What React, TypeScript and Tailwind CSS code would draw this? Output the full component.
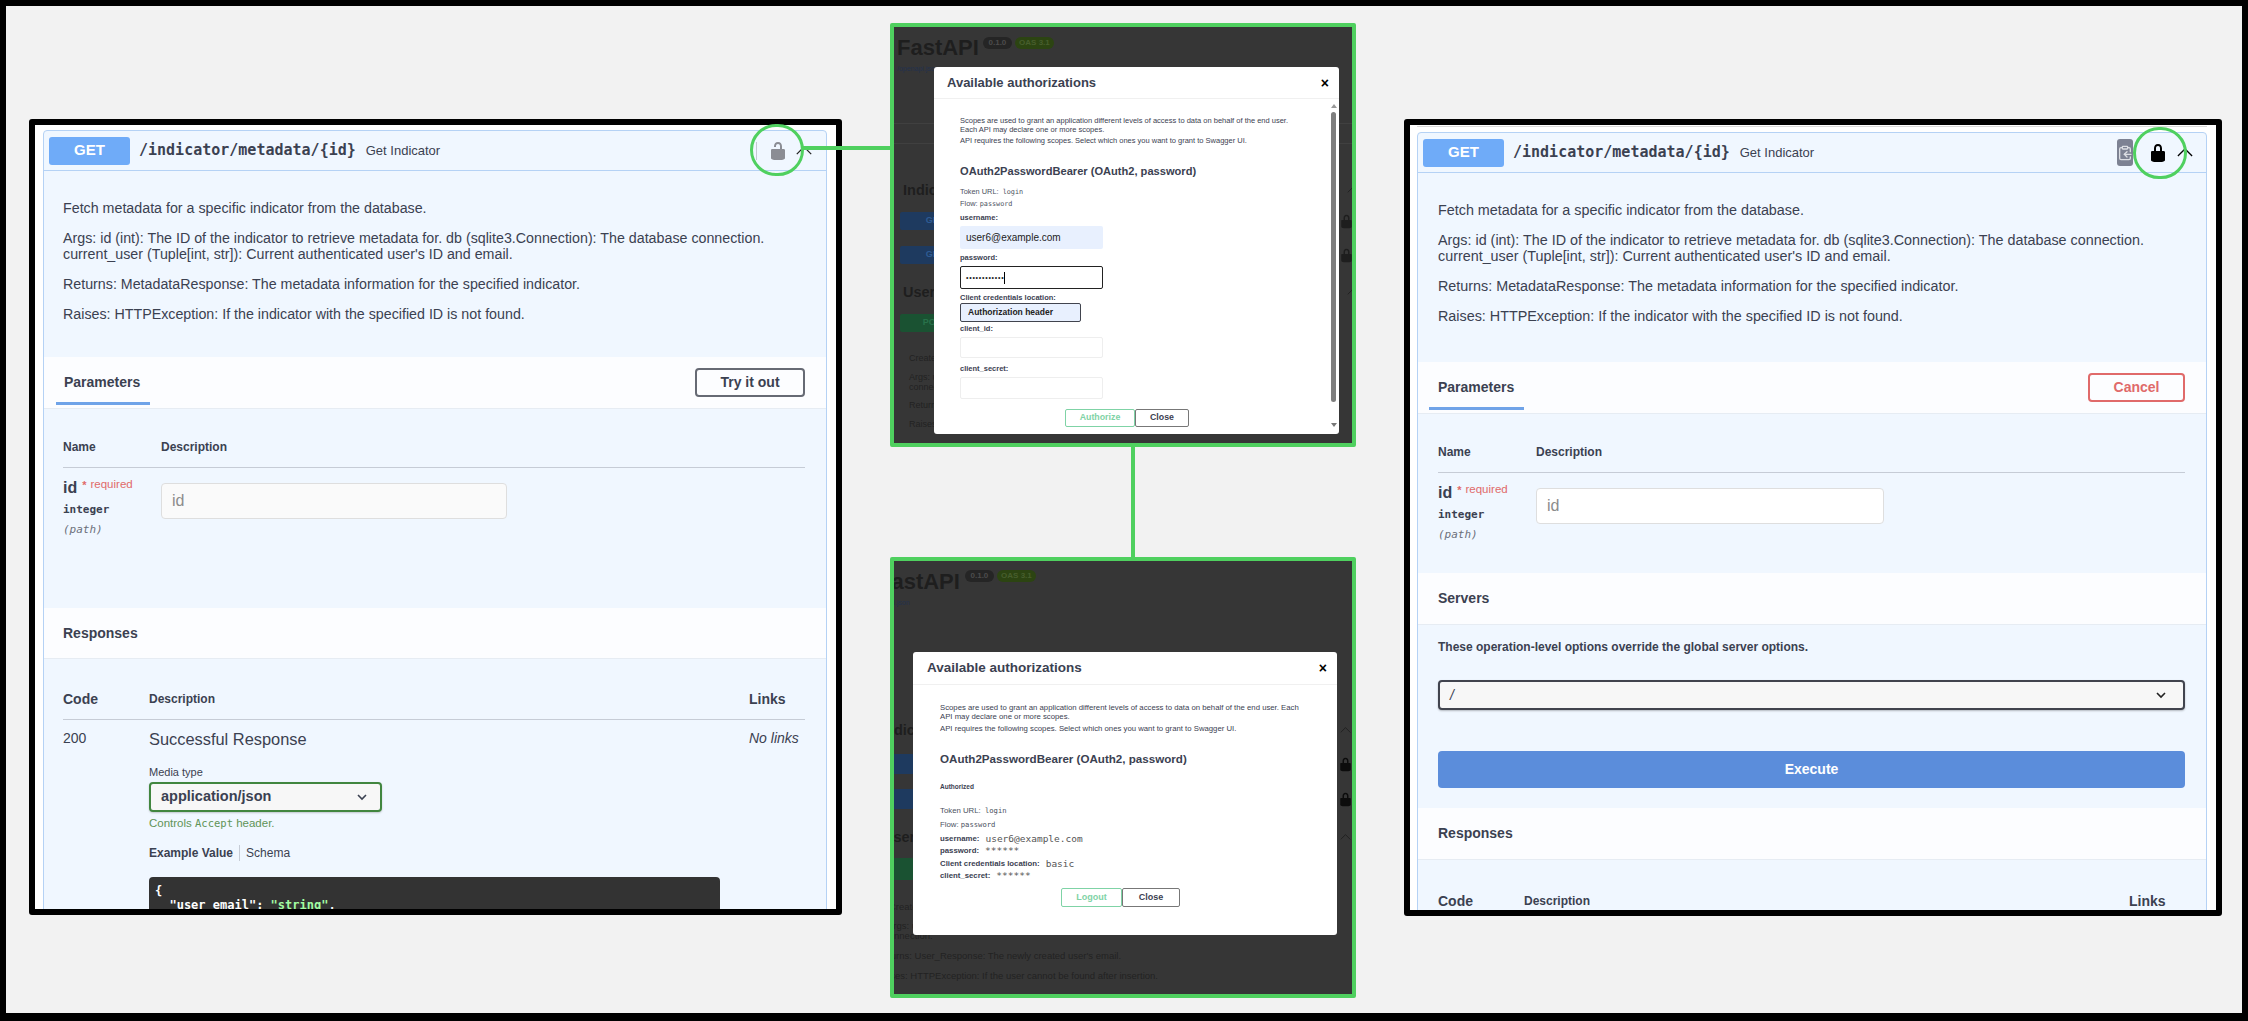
import { ClipboardCopy } from 'lucide-react';

const SANS = 'font-["Liberation_Sans",Arial,sans-serif]';
const MONO = 'font-["DejaVu_Sans_Mono",monospace]';

const LOCKED =
  'M15.8 8H14V5.6C14 2.703 12.665 1 10 1 7.334 1 6 2.703 6 5.6V8H4c-.553 0-1 .646-1 1.199V17c0 .549.428 1.139.951 1.307l1.197.387C5.672 18.861 6.55 19 7.1 19h5.8c.549 0 1.428-.139 1.951-.307l1.196-.387c.524-.167.953-.757.953-1.306V9.199C17 8.646 16.352 8 15.8 8zM12 8H8V5.199C8 3.754 8.797 3 10 3c1.203 0 2 .754 2 2.199V8z';
const UNLOCKED =
  'M15.8 8H14V5.6C14 2.703 12.665 1 10 1 7.334 1 6 2.703 6 5.6V6h2v-.801C8 3.754 8.797 3 10 3c1.203 0 2 .754 2 2.199V8H4c-.553 0-1 .646-1 1.199V17c0 .549.428 1.139.951 1.307l1.197.387C5.672 18.861 6.55 19 7.1 19h5.8c.549 0 1.428-.139 1.951-.307l1.196-.387c.524-.167.953-.757.953-1.306V9.199C17 8.646 16.352 8 15.8 8z';

function Lock({ open, className }: { open?: boolean; className: string }) {
  return (
    <svg viewBox="0 0 20 20" className={className} fill="currentColor">
      <path d={open ? UNLOCKED : LOCKED} />
    </svg>
  );
}

function Chevron({ className }: { className?: string }) {
  return (
    <svg viewBox="0 0 18 10" className={className} fill="none" stroke="currentColor" strokeWidth="1.4">
      <path d="M1 9l8-8 8 8" />
    </svg>
  );
}

function SelectArrow({ className }: { className?: string }) {
  return (
    <svg viewBox="0 0 10 7" className={className} fill="none" stroke="currentColor" strokeWidth="1.6">
      <path d="M1 1l4 4 4-4" />
    </svg>
  );
}

function Summary({ authorized }: { authorized?: boolean }) {
  return (
    <div className="flex h-[40px] items-center border-b border-[#b5d2f5] pl-[5px]">
      <div className="flex h-[28px] w-[81px] items-center justify-center rounded-[3px] bg-[#6fabf8] text-[15px] font-bold text-white">
        GET
      </div>
      <span className={`ml-[9px] text-[15px] font-bold text-[#3b4151] ${MONO}`}>/indicator/metadata/{'{id}'}</span>
      <span className="ml-[10px] text-[13px] text-[#3b4151]">Get Indicator</span>
      {authorized ? (
        <div className="ml-auto flex items-center">
          <div className="flex h-[27px] w-[16px] items-center justify-center rounded-[3px] bg-[#7d8293]">
            <ClipboardCopy className="h-[16px] w-[16px] shrink-0 text-[#dcdee3]" strokeWidth={2} />
          </div>
          <Lock className="ml-[15px] h-[20px] w-[20px] text-black" />
          <Chevron className="mr-[13px] ml-[9px] h-[9px] w-[16px] text-black" />
        </div>
      ) : (
        <div className="ml-auto flex items-center">
          <div className="h-[18px] w-px bg-[#c4c9d2]" />
          <Lock open className="ml-[11px] h-[20px] w-[20px] text-[#8b8d94]" />
          <Chevron className="mr-[13px] ml-[7px] h-[9px] w-[18px] text-[#222]" />
        </div>
      )}
    </div>
  );
}

function Description({ className }: { className: string }) {
  return (
    <div className={`pt-[29px] leading-[16px] text-[#3b4151] ${className}`}>
      <p>Fetch metadata for a specific indicator from the database.</p>
      <p className="mt-[14px]">
        Args: id (int): The ID of the indicator to retrieve metadata for. db (sqlite3.Connection): The database
        connection.
        <br />
        current_user (Tuple[int, str]): Current authenticated user's ID and email.
      </p>
      <p className="mt-[14px]">Returns: MetadataResponse: The metadata information for the specified indicator.</p>
      <p className="mt-[14px]">Raises: HTTPException: If the indicator with the specified ID is not found.</p>
    </div>
  );
}

function ParametersBand({ cancel }: { cancel?: boolean }) {
  return (
    <div
      className={`flex h-[52px] items-start justify-between border-b border-[#e6ecf3] bg-[#fcfdff] pr-[21px] ${cancel ? 'pl-[11px]' : 'pl-[12px]'}`}
    >
      <div
        className={`mt-[5px] flex h-[43px] items-center border-b-[3px] border-[#6fa3e8] text-[14px] font-bold text-[#3b4151] ${cancel ? 'w-[95px] pl-[9px]' : 'w-[94px] pl-[8px]'}`}
      >
        Parameters
      </div>
      {cancel ? (
        <button className="mt-[11px] h-[29px] w-[97px] rounded-[4px] border-2 border-[#e06a6a] text-[14px] font-bold text-[#e06a6a]">
          Cancel
        </button>
      ) : (
        <button className="mt-[11px] h-[29px] w-[110px] rounded-[4px] border-2 border-[#666a74] text-[14px] font-bold text-[#3b4151]">
          Try it out
        </button>
      )}
    </div>
  );
}

function ParametersTable({ inputClass, inset }: { inputClass: string; inset: string }) {
  return (
    <div className={`mr-[21px] pt-[30px] ${inset}`}>
      <div className="flex h-[29px] border-b border-[#c6ccd6] text-[12px] leading-[16px] font-bold text-[#3b4151]">
        <div className="w-[98px]">Name</div>
        <div>Description</div>
      </div>
      <div className="flex pt-[15px]">
        <div className="-mt-[5px] w-[98px]">
          <div className="flex h-[20px] items-start text-[16px] leading-[20px] font-bold text-[#3b4151]">
            id
            <span className="ml-[5px] text-[11px] leading-[14px] font-bold text-[#e06a6a]">*</span>
            <span className="ml-[4px] text-[11.5px] leading-[13px] font-normal whitespace-nowrap text-[#e06a6a]">
              required
            </span>
          </div>
          <div className={`mt-[4px] text-[11px] leading-[16px] font-bold text-[#3b4151] ${MONO}`}>integer</div>
          <div className={`mt-[4px] text-[11px] leading-[16px] text-[#6b6f7a] italic ${MONO}`}>(path)</div>
        </div>
        <div
          className={`flex h-[36px] items-center rounded-[4px] border border-[#dedede] pl-[10px] text-[16px] text-[#8c8c8c] ${inputClass}`}
        >
          id
        </div>
      </div>
    </div>
  );
}

function Band({ title, className }: { title: string; className: string }) {
  return (
    <div className={`flex items-center border-b border-[#e6ecf3] bg-[#fcfdff] text-[14px] font-bold text-[#3b4151] ${className}`}>
      {title}
    </div>
  );
}

function ResponsesHead({ descWidth, inset }: { descWidth: string; inset: string }) {
  return (
    <div className={`mr-[21px] flex h-[29px] border-b border-[#c6ccd6] text-[#3b4151] ${inset}`}>
      <div className="w-[86px] text-[14px] leading-[16px] font-bold">Code</div>
      <div className={`${descWidth} text-[12px] leading-[16px] font-bold`}>Description</div>
      <div className="text-[14px] leading-[16px] font-bold">Links</div>
    </div>
  );
}

function LeftPanel() {
  return (
    <div className={`mt-[113px] ml-[23px] h-[796px] w-[813px] shrink-0 overflow-hidden rounded-[3px] border-[6px] border-black bg-white pt-[5px] pr-[9px] pl-[8px] ${SANS}`}>
      <div className="h-[900px] rounded-t-[4px] border border-[#b5d2f5] bg-[#f0f7ff]">
        <Summary />
        <div className="h-[186px]">
          <Description className="pl-[19px] text-[14.25px]" />
        </div>
        <ParametersBand />
        <div className="h-[199px]">
          <ParametersTable inset="ml-[19px]" inputClass="w-[346px] bg-[#fafafa]" />
        </div>
        <Band title="Responses" className="h-[51px] pl-[19px]" />
        <div className="pt-[32px]">
          <ResponsesHead inset="ml-[19px]" descWidth="w-[600px]" />
          <div className="mr-[21px] ml-[19px] flex pt-[10px] text-[#3b4151]">
            <div className="w-[86px] text-[14px] leading-[16px]">200</div>
            <div className="w-[600px]">
              <div className="-mt-[1px] text-[16.4px] leading-[20px]">Successful Response</div>
              <div className="mt-[15px] text-[11px] leading-[16px]">Media type</div>
              <div className="mt-[2px] flex h-[30px] w-[233px] items-center justify-between rounded-[4px] border-2 border-[#41863f] bg-[#f7f7f7] pr-[13px] pl-[10px] text-[14.5px] font-bold shadow-[0_1px_2px_rgba(0,0,0,0.2)]">
                application/json
                <SelectArrow className="h-[7px] w-[10px]" />
              </div>
              <div className="mt-[3px] text-[11.5px] leading-[16px] text-[#5f9457]">
                Controls <span className={`text-[10.5px] ${MONO}`}>Accept</span> header.
              </div>
              <div className="mt-[14px] flex h-[16px] items-center text-[12px]">
                <span className="font-bold">Example Value</span>
                <span className="mx-[6px] h-[16px] w-px bg-[#c6ccd6]" />
                <span>Schema</span>
              </div>
              <div className={`mt-[16px] h-[120px] w-[571px] rounded-[4px] bg-[#333333] pt-[7px] pl-[6px] text-[12px] leading-[14px] font-bold whitespace-pre text-white ${MONO}`}>
                {'{\n  "user_email": '}
                <span className="text-[#a2fca2]">"string"</span>,
              </div>
            </div>
            <div className="text-[14px] leading-[16px] italic">No links</div>
          </div>
        </div>
      </div>
    </div>
  );
}

function RightPanel() {
  return (
    <div className={`mt-[113px] ml-[48px] h-[797px] w-[818px] shrink-0 overflow-hidden rounded-[3px] border-[6px] border-black bg-white pt-[1px] pr-[9px] pl-[7px] ${SANS}`}>
      <div className="h-px bg-[#d8d8d8]" />
      <div className="mt-[5px] h-[900px] rounded-t-[4px] border border-[#b5d2f5] bg-[#f0f7ff]">
        <Summary authorized />
        <div className="h-[189px]">
          <Description className="pl-[20px] text-[14.35px]" />
        </div>
        <ParametersBand cancel />
        <div className="h-[159px]">
          <ParametersTable inset="ml-[20px]" inputClass="w-[348px] bg-white" />
        </div>
        <Band title="Servers" className="h-[52px] pl-[20px]" />
        <div className="mr-[21px] ml-[20px] h-[183px]">
          <div className="pt-[14px] text-[12px] leading-[16px] font-bold text-[#3b4151]">
            These operation-level options override the global server options.
          </div>
          <div className="mt-[25px] flex h-[30px] items-center justify-between rounded-[4px] border-2 border-[#41444e] bg-[#f7f7f7] pr-[17px] pl-[10px] text-[14px] text-[#3b4151] italic shadow-[0_1px_2px_rgba(0,0,0,0.25)]">
            /
            <SelectArrow className="h-[7px] w-[10px] text-[#222]" />
          </div>
          <div className="mt-[41px] flex h-[37px] items-center justify-center rounded-[4px] bg-[#5b8ddb] text-[14px] font-bold text-white">
            Execute
          </div>
        </div>
        <Band title="Responses" className="h-[52px] pl-[20px]" />
        <div className="pt-[33px]">
          <ResponsesHead inset="ml-[20px]" descWidth="w-[605px]" />
        </div>
      </div>
    </div>
  );
}

function BackdropBar({ color, text, label, lock }: { color: string; text: string; label: string; lock?: string }) {
  return (
    <div className="flex h-full w-full items-center justify-between">
      <div className={`flex h-full w-[70px] items-center justify-center rounded-[2px] text-[9px] font-bold ${color} ${text}`}>
        {label}
      </div>
      {lock && <Lock className={`h-[15px] w-[15px] ${lock}`} />}
    </div>
  );
}

function ModalHeader({ h, pl, titleSize }: { h: string; pl: string; titleSize: string }) {
  return (
    <div className={`flex items-center justify-between border-b border-[#f0f0f0] pr-[10px] ${h} ${pl}`}>
      <span className={`font-bold text-[#3b4151] ${titleSize}`}>Available authorizations</span>
      <span className="text-[14px] leading-none font-bold text-black">×</span>
    </div>
  );
}

function FieldLabel({ children, className }: { children: string; className: string }) {
  return <div className={`h-[10px] text-[7.5px] leading-[10px] font-bold text-[#3b4151] ${className}`}>{children}</div>;
}

function TopModal() {
  return (
    <div className={`absolute top-[40px] left-[40px] h-[367px] w-[405px] rounded-[3px] bg-white ${SANS}`}>
      <ModalHeader h="h-[32px]" pl="pl-[13px]" titleSize="text-[13px]" />
      <div className="flex">
        <div className="flex-1 pt-[17px] pl-[26px] text-[#3b4151]">
          <p className="w-[335px] text-[7.5px] leading-[9px]">
            Scopes are used to grant an application different levels of access to data on behalf of the end user. Each
            API may declare one or more scopes.
          </p>
          <p className="mt-[2px] text-[7.5px] leading-[9px]">
            API requires the following scopes. Select which ones you want to grant to Swagger UI.
          </p>
          <div className="mt-[19px] text-[11.1px] leading-[14px] font-bold">OAuth2PasswordBearer (OAuth2, password)</div>
          <div className="mt-[9px] h-[10px] text-[7.4px] leading-[10px] text-[#4b5160]">
            Token URL: <span className={`ml-[2px] text-[6.8px] ${MONO}`}>login</span>
          </div>
          <div className="mt-[2px] h-[10px] text-[7.4px] leading-[10px] text-[#4b5160]">
            Flow: <span className={`text-[6.8px] ${MONO}`}>password</span>
          </div>
          <FieldLabel className="mt-[4px]">username:</FieldLabel>
          <div className="mt-[3px] flex h-[23px] w-[143px] items-center rounded-[2px] bg-[#e8f0fe] pl-[6px] text-[10px] text-[#222]">
            user6@example.com
          </div>
          <FieldLabel className="mt-[4px]">password:</FieldLabel>
          <div className="mt-[3px] flex h-[23px] w-[143px] items-center rounded-[2px] border-[1.5px] border-[#222] pl-[5px] text-[7px] leading-none tracking-[0.75px] text-[#222]">
            ••••••••••••
            <span className="h-[12px] w-px bg-black" />
          </div>
          <FieldLabel className="mt-[4px]">Client credentials location:</FieldLabel>
          <div className="flex h-[19px] w-[121px] items-center rounded-[2px] border-[1.5px] border-[#41444e] bg-[#e8f0fe] pl-[7px] text-[8.5px] font-bold text-[#222]">
            Authorization header
          </div>
          <FieldLabel className="mt-[2px]">client_id:</FieldLabel>
          <div className="mt-[3px] h-[21px] w-[143px] rounded-[2px] border border-[#eeeeee]" />
          <FieldLabel className="mt-[6px]">client_secret:</FieldLabel>
          <div className="mt-[3px] h-[22px] w-[143px] rounded-[2px] border border-[#eeeeee]" />
          <div className="mt-[10px] ml-[105px] flex">
            <button className="h-[18px] w-[70px] rounded-[2px] border border-[#7fd3a6] text-[8.8px] font-bold text-[#7fd3a6]">
              Authorize
            </button>
            <button className="h-[18px] w-[54px] rounded-[2px] border border-[#777] text-[8.8px] font-bold text-[#3b4151]">
              Close
            </button>
          </div>
        </div>
        <div className="mr-[2px] flex w-[7px] flex-col items-center pt-[5px]">
          <div className="h-0 w-0 border-x-[3px] border-b-[4px] border-x-transparent border-b-[#999]" />
          <div className="mt-[4px] h-[290px] w-[5px] rounded-[3px] bg-[#7e7e7e]" />
          <div className="mt-[21px] h-0 w-0 border-x-[3px] border-t-[4px] border-x-transparent border-t-[#777]" />
        </div>
      </div>
    </div>
  );
}

function AuthRow({ label, value, className }: { label: string; value: string; className: string }) {
  return (
    <div className={`flex h-[10px] items-center ${className}`}>
      <span className="mr-[6px] text-[7.8px] font-bold text-[#3b4151]">{label}</span>
      <span className={`text-[9.5px] text-[#555] ${MONO}`}>{value}</span>
    </div>
  );
}

function BottomModal() {
  return (
    <div className={`absolute top-[91px] left-[19px] h-[283px] w-[424px] rounded-[3px] bg-white ${SANS}`}>
      <ModalHeader h="h-[33px]" pl="pl-[14px]" titleSize="text-[13.5px]" />
      <div className="pt-[18px] pl-[27px] text-[#3b4151]">
        <p className="w-[368px] text-[7.75px] leading-[9px]">
          Scopes are used to grant an application different levels of access to data on behalf of the end user. Each API
          may declare one or more scopes.
        </p>
        <p className="mt-[3px] text-[7.75px] leading-[9px]">
          API requires the following scopes. Select which ones you want to grant to Swagger UI.
        </p>
        <div className="mt-[19px] text-[11.6px] leading-[14px] font-bold">OAuth2PasswordBearer (OAuth2, password)</div>
        <div className="mt-[16px] h-[10px] text-[6.5px] leading-[10px] font-bold">Authorized</div>
        <div className="mt-[14px] h-[10px] text-[7.8px] leading-[10px] text-[#4b5160]">
          Token URL: <span className={`ml-[2px] text-[7.2px] ${MONO}`}>login</span>
        </div>
        <div className="mt-[4px] h-[10px] text-[7.8px] leading-[10px] text-[#4b5160]">
          Flow: <span className={`text-[7.2px] ${MONO}`}>password</span>
        </div>
        <AuthRow className="mt-[4px]" label="username:" value="user6@example.com" />
        <AuthRow className="mt-[2px]" label="password:" value="******" />
        <AuthRow className="mt-[3px]" label="Client credentials location:" value="basic" />
        <AuthRow className="mt-[2px]" label="client_secret:" value="******" />
        <div className="mt-[7px] ml-[121px] flex">
          <button className="h-[19px] w-[61px] rounded-[2px] border border-[#7fd3a6] text-[9px] font-bold text-[#7fd3a6]">
            Logout
          </button>
          <button className="h-[19px] w-[58px] rounded-[2px] border border-[#777] text-[9px] font-bold text-[#3b4151]">
            Close
          </button>
        </div>
      </div>
    </div>
  );
}

function Badges({ className }: { className: string }) {
  return (
    <div className={`flex gap-[3px] ${className}`}>
      <span className="flex h-[12px] w-[29px] items-center justify-center rounded-[6px] bg-[#252525] text-[8px] font-bold text-[#4c4c4c]">
        0.1.0
      </span>
      <span className="flex h-[12px] w-[39px] items-center justify-center rounded-[6px] bg-[#2c4412] text-[8px] font-bold text-[#475e2d]">
        OAS 3.1
      </span>
    </div>
  );
}

function TopScreenshot() {
  return (
    <div className={`relative h-[424px] shrink-0 overflow-hidden rounded-[2px] border-4 border-[#4fd05f] bg-[#363636] text-[#1e1e1e] ${SANS}`}>
      <div className="flex pt-[8px] pl-[3px]">
        <span className="text-[22px] leading-[26px] font-bold">FastAPI</span>
        <Badges className="mt-[2px] ml-[4px]" />
      </div>
      <div className="mt-[3px] pl-[3px] text-[7px] leading-[9px] text-[#23314d]">/openapi.json</div>
      <div className="mt-[50px] h-px bg-[#404040]" />
      <div className="mt-[19px] h-px bg-[#404040]" />
      <div className="mt-[37px] flex items-center justify-between pl-[9px] text-[14.5px] leading-[18px] font-bold">
        Indicators
        <Chevron className="-mr-[6px] h-[6px] w-[11px] text-[#1e1e1e]" />
      </div>
      <div className="mt-[13px] h-[18px] pl-[6px]">
        <BackdropBar color="bg-[#1e3a5f]" text="text-[#2f5c94]" label="GET" lock="-mr-[2px] text-[#1e1e1e]" />
      </div>
      <div className="mt-[16px] h-[18px] pl-[6px]">
        <BackdropBar color="bg-[#1e3a5f]" text="text-[#2f5c94]" label="GET" lock="-mr-[2px] text-[#1e1e1e]" />
      </div>
      <div className="mt-[19px] flex items-center justify-between pl-[9px] text-[14.5px] leading-[18px] font-bold">
        Users
        <Chevron className="-mr-[6px] h-[6px] w-[11px] text-[#1e1e1e]" />
      </div>
      <div className="mt-[13px] h-[18px] pl-[6px]">
        <BackdropBar color="bg-[#1a5232]" text="text-[#28714a]" label="POST" />
      </div>
      <div className="mt-[21px] pl-[15px] text-[9px] leading-[10px] whitespace-nowrap text-[#222]">Create a new user</div>
      <div className="mt-[9px] pl-[15px] text-[9px] leading-[10px] whitespace-nowrap text-[#222]">Args: user</div>
      <div className="pl-[15px] text-[9px] leading-[10px] whitespace-nowrap text-[#222]">connection</div>
      <div className="mt-[8px] pl-[15px] text-[9px] leading-[10px] whitespace-nowrap text-[#222]">Returns</div>
      <div className="mt-[9px] pl-[15px] text-[9px] leading-[10px] whitespace-nowrap text-[#222]">Raises</div>
      <TopModal />
    </div>
  );
}

function BottomScreenshot() {
  return (
    <div className={`relative h-[441px] shrink-0 overflow-hidden rounded-[2px] border-4 border-[#4fd05f] bg-[#363636] text-[#1e1e1e] ${SANS}`}>
      <div className="flex pt-[8px]">
        <span className="-ml-[16px] text-[22px] leading-[26px] font-bold">FastAPI</span>
        <Badges className="mt-[1px] ml-[5px]" />
      </div>
      <div className="mt-[3px] -ml-[26px] text-[7px] leading-[9px] text-[#23314d]">/openapi.json</div>
      <div className="mt-[114px] -ml-[13px] flex w-[472px] items-center justify-between pr-[2px] text-[14.5px] leading-[18px] font-bold">
        Indicators
        <Chevron className="h-[6px] w-[11px] text-[#1e1e1e]" />
      </div>
      <div className="mt-[15px] h-[20px] -ml-[50px] w-[514px]">
        <BackdropBar color="bg-[#1e3a5f]" text="text-[#2f5c94]" label="GET" lock="mr-[5px] text-[#0c0c0c]" />
      </div>
      <div className="mt-[15px] h-[20px] -ml-[50px] w-[514px]">
        <BackdropBar color="bg-[#1e3a5f]" text="text-[#2f5c94]" label="GET" lock="mr-[5px] text-[#0c0c0c]" />
      </div>
      <div className="mt-[19px] -ml-[11px] flex w-[470px] items-center justify-between pr-[2px] text-[14.5px] leading-[18px] font-bold">
        Users
        <Chevron className="h-[6px] w-[11px] text-[#1e1e1e]" />
      </div>
      <div className="mt-[12px] h-[22px] -ml-[50px] w-[514px]">
        <BackdropBar color="bg-[#1a5232]" text="text-[#28714a]" label="POST" />
      </div>
      <div className="mt-[22px] -ml-[5px] text-[9.5px] leading-[10px] whitespace-nowrap text-[#222]">Create a new user</div>
      <div className="mt-[9px] -ml-[7px] text-[9.5px] leading-[10px] whitespace-nowrap text-[#222]">Args: user</div>
      <div className="-ml-[10px] text-[9.5px] leading-[10px] whitespace-nowrap text-[#222]">connection.</div>
      <div className="mt-[10px] -ml-[18px] text-[9.5px] leading-[10px] whitespace-nowrap text-[#222]">
        Returns: User_Response: The newly created user's email.
      </div>
      <div className="mt-[10px] -ml-[18px] text-[9.5px] leading-[10px] whitespace-nowrap text-[#222]">
        Raises: HTTPException: If the user cannot be found after insertion.
      </div>
      <BottomModal />
    </div>
  );
}

export default function App() {
  return (
    <div className="relative flex h-[1021px] w-[2248px] items-start overflow-hidden border-t-[6px] border-r-[6px] border-b-[8px] border-l-[6px] border-black bg-[#f2f2f2]">
      <LeftPanel />
      <div className="mt-[17px] ml-[48px] flex w-[466px] shrink-0 flex-col">
        <TopScreenshot />
        <div className="ml-[241px] h-[110px] w-[4px] bg-[#4fd05f]" />
        <BottomScreenshot />
      </div>
      <RightPanel />

      {/* Callouts drawn over the screenshots */}
      <div className="absolute top-[118px] left-[744px] h-[52px] w-[54px] rounded-full border-[3px] border-[#4fd05f]" />
      <div className="absolute top-[140px] left-[797px] h-[4px] w-[88px] bg-[#4fd05f]" />
      <div className="absolute top-[121px] left-[2127px] h-[52px] w-[54px] rounded-full border-[3px] border-[#4fd05f]" />
    </div>
  );
}
